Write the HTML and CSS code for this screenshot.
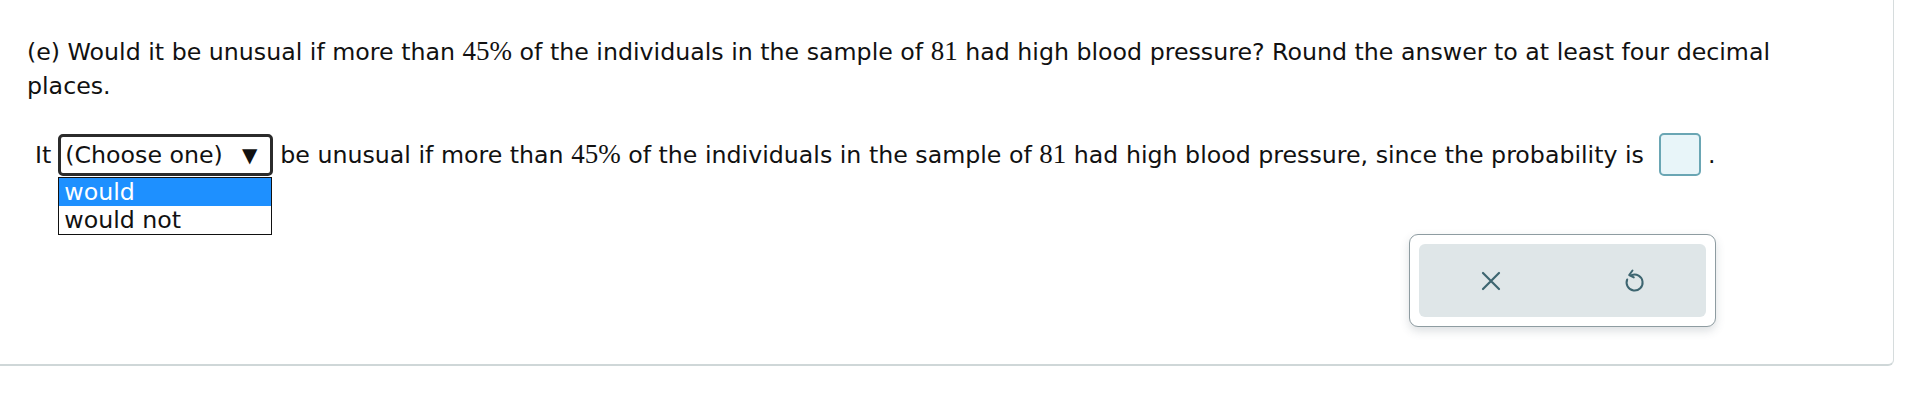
FILE: index.html
```html
<!DOCTYPE html>
<html>
<head>
<meta charset="utf-8">
<link rel="stylesheet" href="styles.css">
</head>
<body>
<div class="card">
  <p class="question">(e) Would it be unusual if more than <span class="math">45%</span> of the individuals in the sample of <span class="math">81</span> had high blood pressure? Round the answer to at least four decimal places.</p>
  <div class="answer-row">
    <span>It</span>
    <span class="select-wrap">
      <span class="select">(Choose one)<span class="arrow">▼</span></span>
      <span class="options">
        <span class="option selected">would</span>
        <span class="option">would not</span>
      </span>
    </span>
    <span>be unusual if more than <span class="math">45%</span> of the individuals in the sample of <span class="math">81</span> had high blood pressure, since the probability is</span>
    <span class="input"></span><span>.</span>
  </div>
  <div class="tools">
    <div class="panel">
      <div class="panel-inner">
        <span class="tool">
          <svg width="22" height="22" viewBox="0 0 22 22"><path d="M3 3 L19 19 M19 3 L3 19" stroke="#3d6570" stroke-width="2.2" fill="none" stroke-linecap="round"/></svg>
        </span>
        <span class="tool">
          <svg width="22" height="24" viewBox="0 0 22 24"><path d="M8.5 6.2 A8 8 0 1 1 4.2 10.5" stroke="#3d6570" stroke-width="2" fill="none" stroke-linecap="round"/><path d="M9.5 1.5 L6.2 6 L10.8 8.4" stroke="#3d6570" stroke-width="2" fill="none" stroke-linecap="round" stroke-linejoin="round"/></svg>
        </span>
      </div>
    </div>
  </div>
</div>
</body>
</html>
```
FILE: styles.css
```css
html, body {
  margin: 0;
  padding: 0;
  background: #ffffff;
}
.card {
  box-sizing: border-box;
  width: 1894px;
  height: 366px;
  border-right: 1px solid #d6dcdd;
  border-bottom: 2px solid #cfd7d8;
  border-bottom-right-radius: 6px;
  padding: 35px 0 0 27px;
  font-family: "DejaVu Sans", Verdana, sans-serif;
  font-size: 23.7px;
  color: #111;
}
.question {
  margin: 0;
  width: 1800px;
  line-height: 34px;
}
.math {
  font-family: "Liberation Serif", "Times New Roman", serif;
  font-size: 27px;
  line-height: 1;
}
.answer-row {
  display: flex;
  align-items: center;
  margin-top: 30px;
  padding-left: 8px;
  gap: 7px;
  height: 43px;
  white-space: nowrap;
}
.select-wrap {
  position: relative;
  display: inline-block;
}
.select {
  box-sizing: border-box;
  display: flex;
  align-items: center;
  justify-content: space-between;
  width: 215px;
  height: 42px;
  border: 3px solid #2b2b2b;
  border-radius: 5px;
  padding: 0 13px 0 4px;
  background: #fff;
}
.arrow {
  font-size: 20px;
}
.options {
  position: absolute;
  left: 0;
  top: 43px;
  box-sizing: border-box;
  width: 214px;
  border: 1px solid #111;
  background: #fff;
  display: flex;
  flex-direction: column;
}
.option {
  height: 28px;
  line-height: 28px;
  padding-left: 5px;
}
.option.selected {
  background: #1e90ff;
  color: #fff;
}
.input {
  box-sizing: border-box;
  display: inline-block;
  width: 42px;
  height: 43px;
  border: 2px solid #6aa6b4;
  border-radius: 5px;
  background: #e8f5f9;
  margin-left: 8px;
}
.tools {
  display: flex;
  padding-left: 1382px;
  margin-top: 58px;
}
.panel {
  box-sizing: border-box;
  width: 307px;
  height: 93px;
  border: 1px solid #8e9ca1;
  border-radius: 9px;
  background: #fff;
  padding: 9px;
  box-shadow: 0 4px 10px rgba(60, 80, 90, 0.18);
}
.panel-inner {
  height: 100%;
  border-radius: 6px;
  background: #dfe6e8;
  display: flex;
  align-items: center;
  justify-content: space-around;
}
.tool {
  display: flex;
  align-items: center;
  justify-content: center;
  width: 40px;
  height: 40px;
}
```
